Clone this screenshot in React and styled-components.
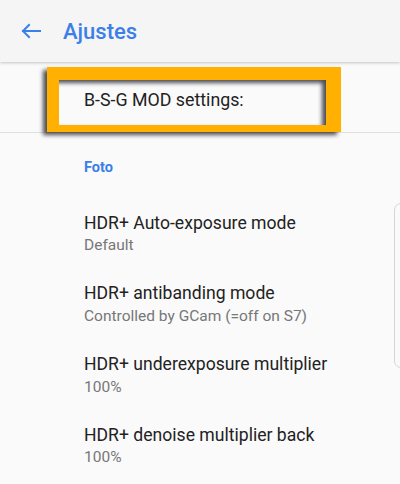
import React from 'react'
import styled, { createGlobalStyle } from 'styled-components'

const GlobalStyle = createGlobalStyle`
  html, body {
    margin: 0;
    padding: 0;
    background: #fafafa;
    font-family: Roboto, "Noto Sans", sans-serif;
    -webkit-font-smoothing: antialiased;
  }
`

const Screen = styled.div`
  position: relative;
  width: 400px;
  height: 484px;
  overflow: hidden;
  background: #fafafa;
`

const AppBar = styled.header`
  position: relative;
  z-index: 2;
  height: 62px;
  display: flex;
  align-items: center;
  background: #f5f5f5;
  box-shadow: 0 1px 3px rgba(0, 0, 0, 0.22);
`

const BackButton = styled.div`
  width: 62px;
  height: 62px;
  display: flex;
  align-items: center;
  padding-left: 21px;
  box-sizing: border-box;
`

const Title = styled.h1`
  margin: 0 0 0 1px;
  font-size: 22px;
  font-weight: 500;
  color: #3b7fe9;
`

const ModRow = styled.div`
  position: relative;
  height: 71px;
  display: flex;
  align-items: center;
  padding: 4px 0 0 84px;
  box-sizing: border-box;
  border-bottom: 1px solid #e0e0e0;
  font-size: 17.8px;
  color: #222;
`

const Highlight = styled.div`
  position: absolute;
  left: 47px;
  top: 5px;
  width: 294px;
  height: 65px;
  box-sizing: border-box;
  border-style: solid;
  border-color: #ffb000;
  border-width: 13px 15px 7px 12px;
  filter: drop-shadow(-4px 3px 2px rgba(20, 20, 30, 0.75));
`

const Section = styled.div`
  padding: 24.5px 0 20px 84px;
  font-size: 14.5px;
  line-height: 20px;
  font-weight: 700;
  color: #3b7fe9;
`

const Item = styled.div`
  padding: 14px 0 12.3px 84px;
`

const ItemTitle = styled.div`
  font-size: 17.6px;
  line-height: 23.5px;
  color: #222;
`

const ItemSub = styled.div`
  font-size: 15.5px;
  line-height: 21px;
  color: #777;
`

const EdgeHandle = styled.div`
  position: absolute;
  left: 394px;
  top: 203px;
  width: 20px;
  height: 163px;
  border: 1px solid #d6d6d6;
  border-radius: 7px;
  background: #fafafa;
`

const items = [
  { title: 'HDR+ Auto-exposure mode', sub: 'Default' },
  { title: 'HDR+ antibanding mode', sub: 'Controlled by GCam (=off on S7)' },
  { title: 'HDR+ underexposure multiplier', sub: '100%' },
  { title: 'HDR+ denoise multiplier back', sub: '100%' },
]

const App = () => {
  return (
    <Screen>
      <GlobalStyle />
      <AppBar>
        <BackButton>
          <svg width="20" height="16" viewBox="0 0 20 16" fill="none">
            <path d="M19 8H2M8 2L2 8l6 6" stroke="#3b7fe9" strokeWidth="2" strokeLinecap="square" />
          </svg>
        </BackButton>
        <Title>Ajustes</Title>
      </AppBar>
      <ModRow>
        B-S-G MOD settings:
        <Highlight />
      </ModRow>
      <Section>Foto</Section>
      {items.map((it) => (
        <Item key={it.title}>
          <ItemTitle>{it.title}</ItemTitle>
          <ItemSub>{it.sub}</ItemSub>
        </Item>
      ))}
      <EdgeHandle />
    </Screen>
  )
}

export default App
